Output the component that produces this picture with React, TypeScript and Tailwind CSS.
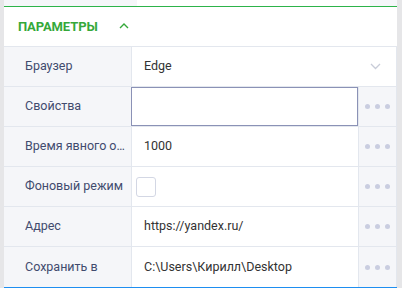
import React from 'react';

const rows: { label: string; value?: string; kind: 'select' | 'input' | 'text' | 'check' }[] = [
  { label: 'Браузер', value: 'Edge', kind: 'select' },
  { label: 'Свойства', kind: 'input' },
  { label: 'Время явного ожидания', value: '1000', kind: 'text' },
  { label: 'Фоновый режим', kind: 'check' },
  { label: 'Адрес', value: 'https://yandex.ru/', kind: 'text' },
  { label: 'Сохранить в', value: 'C:\\Users\\Кирилл\\Desktop', kind: 'text' },
];

const Dots = () => (
  <div className="w-[38px] shrink-0 bg-[#f5f6f9] border-l border-[#e3e7ee] flex items-center justify-center gap-[5px]">
    <span className="h-[5px] w-[5px] rounded-full bg-[#c9cde0]" />
    <span className="h-[5px] w-[5px] rounded-full bg-[#c9cde0]" />
    <span className="h-[5px] w-[5px] rounded-full bg-[#c9cde0]" />
  </div>
);

export default function App() {
  return (
    <div
      className="w-[402px] h-[288px] overflow-hidden flex bg-white text-[12.5px]"
      style={{ fontFamily: 'Roboto, "Noto Sans", sans-serif' }}
    >
      <div className="w-[4px] shrink-0 bg-[#e6e6e8]" />
      <div className="flex-1 flex flex-col min-w-0">
        {/* previous row, cut off */}
        <div className="h-[6px] flex shrink-0">
          <div className="w-[133px] bg-[#f5f6f9]" />
          <div className="flex-1 bg-white" />
          <div className="w-[27px] bg-[#f5f6f9]" />
        </div>
        <div className="h-px shrink-0 bg-[#2db34a]" />

        <div className="h-[40px] shrink-0 border-b border-[#e3e7ee] flex items-center pl-[14px] gap-[21px]">
          <span className="font-bold uppercase text-[13px] text-[#35a83a] tracking-[-0.1px]">Параметры</span>
          <svg width="10" height="6" viewBox="0 0 10 6" className="mt-[-2px]">
            <path d="M1 5 L5 1 L9 5" fill="none" stroke="#35a83a" strokeWidth="1.4" />
          </svg>
        </div>

        {rows.map((r, i) => (
          <div
            key={i}
            className={`h-[40px] shrink-0 flex border-r border-[#e3e7ee] ${i < rows.length - 1 ? 'border-b' : ''} border-b-[#e3e7ee]`}
          >
            <div className="w-[128px] shrink-0 bg-[#f5f6f9] border-r border-[#e3e7ee] pl-[21px] pr-[4px] flex items-center text-[#414b6e] min-w-0">
              <span className="truncate">{r.label}</span>
            </div>
            {r.kind === 'select' && (
              <div className="flex-1 flex items-center justify-between pl-[12px] pr-[15px] text-[#333]">
                <span>{r.value}</span>
                <svg width="11" height="7" viewBox="0 0 11 7">
                  <path d="M1 1 L5.5 5.5 L10 1" fill="none" stroke="#c8ccd8" strokeWidth="1.3" />
                </svg>
              </div>
            )}
            {r.kind === 'input' && (
              <>
                <div className="flex-1 -ml-px border border-[#8b92b6] bg-white" />
                <Dots />
              </>
            )}
            {r.kind === 'text' && (
              <>
                <div className="flex-1 flex items-center pl-[12px] text-[#333] min-w-0">
                  <span className="truncate">{r.value}</span>
                </div>
                <Dots />
              </>
            )}
            {r.kind === 'check' && (
              <>
                <div className="flex-1 flex items-center pl-[4px]">
                  <div className="w-[20px] h-[20px] border border-[#d3d7e4] rounded-[3px] bg-white" />
                </div>
                <Dots />
              </>
            )}
          </div>
        ))}
        <div className="h-[2px] shrink-0 bg-[#1e8ef0]" />
        <div className="flex-1" />
      </div>
      <div className="w-[5px] shrink-0 bg-[#e6e6e8]" />
    </div>
  );
}
